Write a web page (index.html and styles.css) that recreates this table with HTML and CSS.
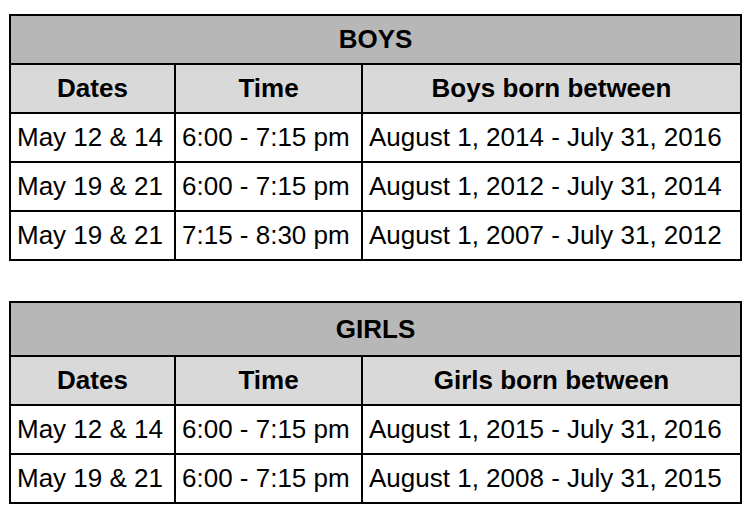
FILE: index.html
```html
<!DOCTYPE html>
<html>
<head>
<meta charset="utf-8">
<link rel="stylesheet" href="styles.css">
</head>
<body>
<div class="page">
  <table class="sched">
    <colgroup><col class="c1"><col class="c2"><col class="c3"></colgroup>
    <tr><th class="title" colspan="3">BOYS</th></tr>
    <tr class="head"><th>Dates</th><th>Time</th><th>Boys born between</th></tr>
    <tr><td>May 12 &amp; 14</td><td>6:00 - 7:15 pm</td><td>August 1, 2014 - July 31, 2016</td></tr>
    <tr><td>May 19 &amp; 21</td><td>6:00 - 7:15 pm</td><td>August 1, 2012 - July 31, 2014</td></tr>
    <tr><td>May 19 &amp; 21</td><td>7:15 - 8:30 pm</td><td>August 1, 2007 - July 31, 2012</td></tr>
  </table>
  <table class="sched">
    <colgroup><col class="c1"><col class="c2"><col class="c3"></colgroup>
    <tr><th class="title tall" colspan="3">GIRLS</th></tr>
    <tr class="head"><th>Dates</th><th>Time</th><th>Girls born between</th></tr>
    <tr><td>May 12 &amp; 14</td><td>6:00 - 7:15 pm</td><td>August 1, 2015 - July 31, 2016</td></tr>
    <tr><td>May 19 &amp; 21</td><td>6:00 - 7:15 pm</td><td>August 1, 2008 - July 31, 2015</td></tr>
  </table>
</div>
</body>
</html>
```
FILE: styles.css
```css
html, body {
  margin: 0;
  padding: 0;
  background: #fff;
}
.page {
  padding: 14px 0 0 9px;
  display: flex;
  flex-direction: column;
  gap: 40px;
  font-family: "Liberation Sans", Arial, sans-serif;
  color: #000;
}
.sched {
  border-collapse: collapse;
  table-layout: fixed;
  width: 731px;
  font-size: 26px;
}
.c1 { width: 165px; }
.c2 { width: 187px; }
.c3 { width: 379px; }
.sched th, .sched td {
  border: 2px solid #000;
  height: 47px;
  padding: 0 6px;
  line-height: 47px;
  white-space: nowrap;
  overflow: hidden;
  box-sizing: border-box;
}
.sched td {
  text-align: left;
  font-weight: normal;
}
.sched th {
  text-align: center;
  font-weight: bold;
}
.title {
  background: #b7b7b7;
}
.sched .tall {
  height: 52px;
  line-height: 52px;
}
.head th {
  background: #d9d9d9;
}
```
